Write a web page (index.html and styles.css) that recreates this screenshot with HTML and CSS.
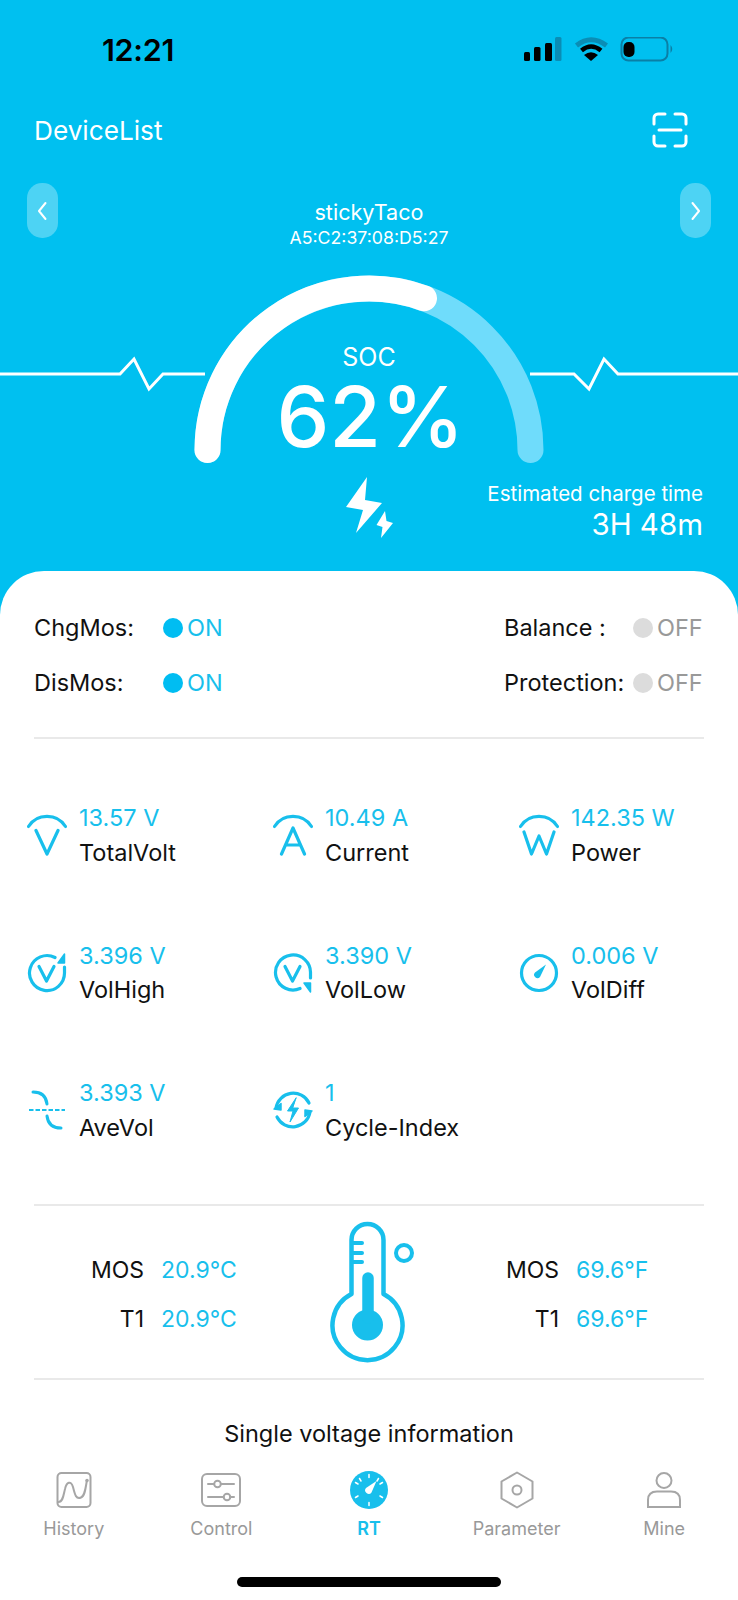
FILE: index.html
```html
<!DOCTYPE html>
<html lang="en">
<head>
    <meta charset="UTF-8">
    <meta name="viewport" content="width=device-width, initial-scale=1.0">
    <title>RT</title>
    <link rel="stylesheet" href="styles.css">
</head>
<body>

<div class="phone">
    <!-- Status bar -->
    <div class="status">
        <span class="clock">12:21</span>
        <svg class="status-icons" width="150" height="26" viewBox="0 0 150 26">
            <rect x="0" y="15" width="6" height="9" rx="1.5" fill="#000"/>
            <rect x="10" y="10" width="6.5" height="14" rx="1.5" fill="#000"/>
            <rect x="21" y="6" width="7" height="18" rx="1.5" fill="#000"/>
            <rect x="31" y="0" width="6.5" height="24" rx="1.5" fill="#0a8db5"/>
            <path d="M52.5 8.5 Q67 -3 82.5 8.5" fill="none" stroke="#0a8db5" stroke-width="5"/>
            <path d="M57.5 13.5 Q67 5.5 77 13.5" fill="none" stroke="#000" stroke-width="4.5"/>
            <path d="M60 18 L67 24 L74 18 Q67 12.5 60 18 Z" fill="#000"/>
            <rect x="97.5" y="0.5" width="46" height="23" rx="7" fill="none" stroke="#0a7fa6" stroke-width="2"/>
            <rect x="99.5" y="5" width="11" height="15" rx="5" fill="#000"/>
            <path d="M146.5 8 Q150 12 146.5 16 Z" fill="#0a7fa6"/>
        </svg>
    </div>

    <div class="topbar">
        <span class="topbar-title">DeviceList</span>
        <svg width="36" height="36" viewBox="0 0 36 36" fill="none" stroke="#fff" stroke-width="3" stroke-linecap="round" stroke-linejoin="round">
            <path d="M2 12V6a4 4 0 0 1 4-4h7"/>
            <path d="M23 2h7a4 4 0 0 1 4 4v6"/>
            <path d="M2 24v6a4 4 0 0 0 4 4h7"/>
            <path d="M23 34h7a4 4 0 0 0 4-4v-6"/>
            <path d="M7 18h22"/>
        </svg>
    </div>

    <div class="device">
        <div class="nav-btn">
            <svg width="12" height="20" viewBox="0 0 12 20" fill="none" stroke="#fff" stroke-width="2" stroke-linecap="round" stroke-linejoin="round"><path d="M8.5 2 2 10l6.5 8"/></svg>
        </div>
        <div class="device-name">
            <div class="device-title">stickyTaco</div>
            <div class="device-mac">A5:C2:37:08:D5:27</div>
        </div>
        <div class="nav-btn">
            <svg width="12" height="20" viewBox="0 0 12 20" fill="none" stroke="#fff" stroke-width="2" stroke-linecap="round" stroke-linejoin="round"><path d="M2.5 2 9 10l-6.5 8"/></svg>
        </div>
    </div>

    <!-- Gauge, the lines either side are part of the same drawing -->
    <div class="gauge">
        <svg class="gauge-art" width="738" height="270" viewBox="0 0 738 270" fill="none">
            <path d="M207.5 176 A161.5 161.5 0 0 1 530.5 176" stroke="#6fdcfb" stroke-width="26" stroke-linecap="round"/>
            <path d="M207.5 176 A161.5 161.5 0 0 1 424 24.2" stroke="#fff" stroke-width="26" stroke-linecap="round"/>
            <path d="M0 100H120L134 85 149 115 163 100H205" stroke="#fff" stroke-width="3"/>
            <path d="M530 100H574L589 115 604 85 618 100H738" stroke="#fff" stroke-width="3"/>
            <path d="M367 203 346 233 363 236 356 259 382 229 365 226Z" fill="#fff"/>
            <path d="M385 237 376.5 251 382.5 253 381 264 393 249 386.5 247Z" fill="#fff"/>
        </svg>
        <div class="soc-label">SOC</div>
        <div class="soc-value">62%</div>
        <div class="estimate">
            <div class="estimate-label">Estimated charge time</div>
            <div class="estimate-value">3H 48m</div>
        </div>
    </div>

    <div class="card">
        <div class="switches">
            <div class="switch"><span class="switch-name">ChgMos:</span><span class="dot dot-on"></span><span class="on">ON</span></div>
            <div class="switch"><span class="switch-name">Balance :</span><span class="dot dot-off"></span><span class="off">OFF</span></div>
            <div class="switch"><span class="switch-name">DisMos:</span><span class="dot dot-on"></span><span class="on">ON</span></div>
            <div class="switch"><span class="switch-name">Protection:</span><span class="dot dot-off"></span><span class="off">OFF</span></div>
        </div>

        <div class="metrics">
            <div class="metric">
                <svg class="metric-icon" width="40" height="42" viewBox="0 0 40 42" fill="none" stroke="#18bfec" stroke-width="3.2" stroke-linecap="round" stroke-linejoin="round">
                    <path d="M1.5 12.5C10 -1 30 -1 38.5 12.5"/>
                    <path d="M9 16.5 20 40 31 16.5"/>
                </svg>
                <div><div class="metric-value">13.57 V</div><div class="metric-label">TotalVolt</div></div>
            </div>
            <div class="metric">
                <svg class="metric-icon" width="40" height="42" viewBox="0 0 40 42" fill="none" stroke="#18bfec" stroke-width="3.2" stroke-linecap="round" stroke-linejoin="round">
                    <path d="M1.5 12.5C10 -1 30 -1 38.5 12.5"/>
                    <path d="M8.5 40 20 14 31.5 40M12.5 31H27.5"/>
                </svg>
                <div><div class="metric-value">10.49 A</div><div class="metric-label">Current</div></div>
            </div>
            <div class="metric">
                <svg class="metric-icon" width="40" height="42" viewBox="0 0 40 42" fill="none" stroke="#18bfec" stroke-width="3.2" stroke-linecap="round" stroke-linejoin="round">
                    <path d="M1.5 12.5C10 -1 30 -1 38.5 12.5"/>
                    <path d="M5 18 12.5 40 20 22 27.5 40 35 18"/>
                </svg>
                <div><div class="metric-value">142.35 W</div><div class="metric-label">Power</div></div>
            </div>

            <div class="metric">
                <svg class="metric-icon" width="40" height="42" viewBox="0 0 40 42" fill="none" stroke="#18bfec" stroke-width="3.2" stroke-linecap="round" stroke-linejoin="round">
                    <path d="M28 5.5A17.5 17.5 0 1 0 37.5 21V15"/>
                    <path d="M12 14.5 19.5 29 27 14.5"/>
                    <path d="M37.5 2V11H31Z" fill="#18bfec" stroke-width="1.5"/>
                </svg>
                <div><div class="metric-value">3.396 V</div><div class="metric-label">VolHigh</div></div>
            </div>
            <div class="metric">
                <svg class="metric-icon" width="40" height="42" viewBox="0 0 40 42" fill="none" stroke="#18bfec" stroke-width="3.2" stroke-linecap="round" stroke-linejoin="round">
                    <path d="M27 36.5A17.5 17.5 0 1 1 37.5 21V26"/>
                    <path d="M12 14.5 19.5 29 27 14.5"/>
                    <path d="M37.5 40V31H31Z" fill="#18bfec" stroke-width="1.5"/>
                </svg>
                <div><div class="metric-value">3.390 V</div><div class="metric-label">VolLow</div></div>
            </div>
            <div class="metric">
                <svg class="metric-icon" width="40" height="42" viewBox="0 0 40 42" fill="none" stroke="#18bfec" stroke-width="3.2" stroke-linecap="round" stroke-linejoin="round">
                    <circle cx="20" cy="21" r="17.5"/>
                    <path d="M16 20.5 27 12.5 21 25A3.2 3.2 0 0 1 16 20.5Z" fill="#18bfec" stroke="none"/>
                </svg>
                <div><div class="metric-value">0.006 V</div><div class="metric-label">VolDiff</div></div>
            </div>

            <div class="metric">
                <svg class="metric-icon" width="40" height="42" viewBox="0 0 40 42" fill="none" stroke="#18bfec" stroke-width="3" stroke-linecap="round">
                    <path d="M6 3C14 3 19 6 20 15"/>
                    <path d="M20 27C21 36 26 39 34 39"/>
                    <path d="M2 21H38" stroke-width="2" stroke-linecap="butt" stroke-dasharray="4.5 2"/>
                </svg>
                <div><div class="metric-value">3.393 V</div><div class="metric-label">AveVol</div></div>
            </div>
            <div class="metric">
                <svg class="metric-icon" width="40" height="42" viewBox="0 0 40 42" fill="none" stroke="#18bfec" stroke-width="3.2" stroke-linecap="round" stroke-linejoin="round">
                    <path d="M3 19A17.5 17.5 0 0 1 36 14"/>
                    <path d="M37 23A17.5 17.5 0 0 1 4 28"/>
                    <path d="M1 20 8 14.5 8 21Z" fill="#18bfec" stroke-width="1.5"/>
                    <path d="M39 22 32 27.5 32 21Z" fill="#18bfec" stroke-width="1.5"/>
                    <path d="M23 9 14.5 22H20L17 33 25.5 19H20Z" fill="#18bfec" stroke-width="1"/>
                </svg>
                <div><div class="metric-value">1</div><div class="metric-label">Cycle-Index</div></div>
            </div>
        </div>

        <div class="temps">
            <div class="temp-table">
                <span class="temp-name">MOS</span><span class="temp-value">20.9°C</span>
                <span class="temp-name">T1</span><span class="temp-value">20.9°C</span>
            </div>
            <svg class="thermo" width="90" height="145" viewBox="0 0 90 145" fill="none" stroke="#18bfec" stroke-width="4.5" stroke-linecap="round" stroke-linejoin="round">
                <path d="M25.5 76V22A16 16 0 0 1 57.5 22V76A35 35 0 1 1 25.5 76Z"/>
                <path d="M26 25H36M26 35H36M26 44H36" stroke-width="4"/>
                <circle cx="41.5" cy="107" r="15.5" fill="#18bfec" stroke="none"/>
                <path d="M42 60V100" stroke-width="11.5"/>
                <circle cx="78" cy="35" r="8" stroke-width="4"/>
            </svg>
            <div class="temp-table">
                <span class="temp-name">MOS</span><span class="temp-value">69.6°F</span>
                <span class="temp-name">T1</span><span class="temp-value">69.6°F</span>
            </div>
        </div>

        <div class="single">Single voltage information</div>

        <div class="tabs">
            <div class="tab">
                <svg width="40" height="38" viewBox="0 0 40 38" fill="none" stroke="#a6a6a6" stroke-width="2" stroke-linecap="round">
                    <rect x="3.5" y="2" width="33" height="34" rx="4"/>
                    <path d="M4.5 31C9 31 9.5 24 11 18C12.5 11 17 9 19 16C21 24 22 28.5 27 26.5C31 25 31.5 17 33 9"/>
                    <path d="M33 9.5v-.1" stroke-width="3.5"/>
                </svg>
                <span class="tab-label">History</span>
            </div>
            <div class="tab">
                <svg width="40" height="38" viewBox="0 0 40 38" fill="none" stroke="#a6a6a6" stroke-width="2" stroke-linecap="round">
                    <rect x="1" y="3" width="38" height="32" rx="5"/>
                    <path d="M7 13H13M20 13H33M7 26H22.5M29 26H33"/>
                    <circle cx="16.5" cy="13" r="3.3"/>
                    <circle cx="26" cy="26" r="3.3"/>
                </svg>
                <span class="tab-label">Control</span>
            </div>
            <div class="tab tab-active">
                <svg width="40" height="38" viewBox="0 0 40 38" fill="none" stroke="#fff" stroke-width="1.5" stroke-linecap="round">
                    <circle cx="20" cy="19" r="19" fill="#18bfec" stroke="none"/>
                    <path d="M20 3.5V6.5M20 31.5V34.5M6.5 11.5 9 13M31 25 33.5 26.5M6.5 26.5 9 25M31 13 33.5 11.5M29.5 7.5 28 10M10.5 7.5 12 10"/>
                    <path d="M17 17 27.5 10 22.5 21.5A3.5 3.5 0 0 1 17 17Z" fill="#fff" stroke="none"/>
                </svg>
                <span class="tab-label">RT</span>
            </div>
            <div class="tab">
                <svg width="40" height="38" viewBox="0 0 40 38" fill="none" stroke="#a6a6a6" stroke-width="2" stroke-linejoin="round">
                    <path d="M20 1.5 35.5 10.5V27.5L20 36.5 4.5 27.5V10.5Z"/>
                    <circle cx="20" cy="19" r="4.5"/>
                </svg>
                <span class="tab-label">Parameter</span>
            </div>
            <div class="tab">
                <svg width="40" height="38" viewBox="0 0 40 38" fill="none" stroke="#a6a6a6" stroke-width="2">
                    <circle cx="20" cy="9.5" r="7.5"/>
                    <path d="M4 36V29C4 23 8 20.5 13 20.5H27C32 20.5 36 23 36 29V36Z"/>
                </svg>
                <span class="tab-label">Mine</span>
            </div>
        </div>

        <div class="home-bar"></div>
    </div>
</div>

</body>
</html>
```

FILE: styles.css
```css
* {
    box-sizing: border-box;
}
body {
    margin: 0;
    font-family: Inter, "Liberation Sans", sans-serif;
    color: #111;
}
.phone {
    width: 738px;
    height: 1600px;
    background: #00c0f0;
    display: flex;
    flex-direction: column;
    overflow: hidden;
}
.status {
    height: 100px;
    padding: 37px 0 0 102px;
    display: flex;
    justify-content: space-between;
    align-items: flex-start;
}
.clock {
    font-size: 30.5px;
    font-weight: 600;
    line-height: 26px;
    letter-spacing: -0.3px;
    color: #000;
}
.status-icons {
    margin-right: 64px;
}
.topbar {
    height: 83px;
    padding: 12px 50px 0 34px;
    display: flex;
    justify-content: space-between;
    align-items: flex-start;
    color: #fff;
}
.topbar-title {
    font-size: 26.2px;
    line-height: 38px;
}
.device {
    height: 93px;
    padding: 0 27px;
    display: flex;
    justify-content: space-between;
    align-items: flex-start;
    color: #fff;
}
.nav-btn {
    width: 31px;
    height: 55px;
    border-radius: 15px;
    background: rgba(255, 255, 255, 0.3);
    display: flex;
    align-items: center;
    justify-content: center;
}
.device-name {
    text-align: center;
    padding-top: 14px;
}
.device-title {
    font-size: 21.6px;
    line-height: 30px;
}
.device-mac {
    font-size: 17.7px;
    line-height: 21px;
}
.gauge {
    position: relative;
    height: 295px;
    color: #fff;
}
.gauge-art {
    position: absolute;
    left: 0;
    top: -2px;
}
.soc-label {
    position: absolute;
    left: 0;
    right: 0;
    top: 66px;
    text-align: center;
    font-size: 25px;
    line-height: 30px;
}
.soc-value {
    position: absolute;
    left: 3px;
    right: 0;
    top: 106px;
    text-align: center;
    font-size: 84px;
    font-weight: 500;
    line-height: 70px;
}
.estimate {
    position: absolute;
    right: 35px;
    top: 205px;
    text-align: right;
}
.estimate-label {
    font-size: 20.5px;
    line-height: 26px;
}
.estimate-value {
    font-size: 29.5px;
    line-height: 35px;
}
.card {
    flex: 1;
    background: white;
    border-radius: 44px 44px 0 0;
    padding-top: 29px;
    display: flex;
    flex-direction: column;
}
.switches {
    margin: 0 34px;
    height: 139px;
    display: grid;
    grid-template-columns: 470px 1fr;
    grid-auto-rows: 55px;
    border-bottom: 2px solid #e9e9e9;
}
.switch {
    display: flex;
    align-items: center;
    font-size: 23.5px;
}
.switch-name {
    width: 129px;
}
.dot {
    width: 20px;
    height: 20px;
    border-radius: 50%;
    margin-right: 4px;
}
.dot-on {
    background: #00bdf2;
}
.dot-off {
    background: #dcdcdc;
}
.on {
    color: #18bfec;
}
.off {
    color: #999;
}
.metrics {
    padding: 62px 0 0 27px;
    height: 465px;
    display: grid;
    grid-template-columns: repeat(3, 246px);
    grid-auto-rows: 137.5px;
}
.metric {
    display: flex;
    align-items: flex-start;
    gap: 12px;
}
.metric-icon {
    margin-top: 13px;
    flex: none;
}
.metric-value {
    color: #18bfec;
    font-size: 23.5px;
    line-height: 34.5px;
}
.metric-label {
    font-size: 23.5px;
    line-height: 34px;
}
.temps {
    margin: 0 34px;
    height: 176px;
    border-top: 2px solid #e9e9e9;
    border-bottom: 2px solid #e9e9e9;
    display: flex;
    gap: 90px;
    align-items: center;
    padding-left: 56px;
}
.temp-table {
    display: grid;
    grid-template-columns: 54px 74px;
    column-gap: 17px;
    row-gap: 21px;
    padding-top: 4px;
    font-size: 23px;
    line-height: 28px;
}
.temp-name {
    text-align: right;
}
.temp-value {
    color: #18bfec;
}
.thermo {
    flex: none;
    margin: 0 -1px 3px 1px;
}
.single {
    text-align: center;
    font-size: 23.5px;
    line-height: 30px;
    padding-top: 39px;
    height: 89px;
}
.tabs {
    display: grid;
    grid-template-columns: repeat(5, 1fr);
    height: 76px;
    padding-top: 2px;
}
.tab {
    display: flex;
    flex-direction: column;
    align-items: center;
    color: #999;
    font-size: 18px;
}
.tab-label {
    line-height: 24px;
    margin-top: 8px;
}
.tab-active {
    color: #18bfec;
    font-weight: 600;
}
.home-bar {
    width: 264px;
    height: 10px;
    border-radius: 5px;
    background: #000;
    margin: 32px auto 0;
}
```
